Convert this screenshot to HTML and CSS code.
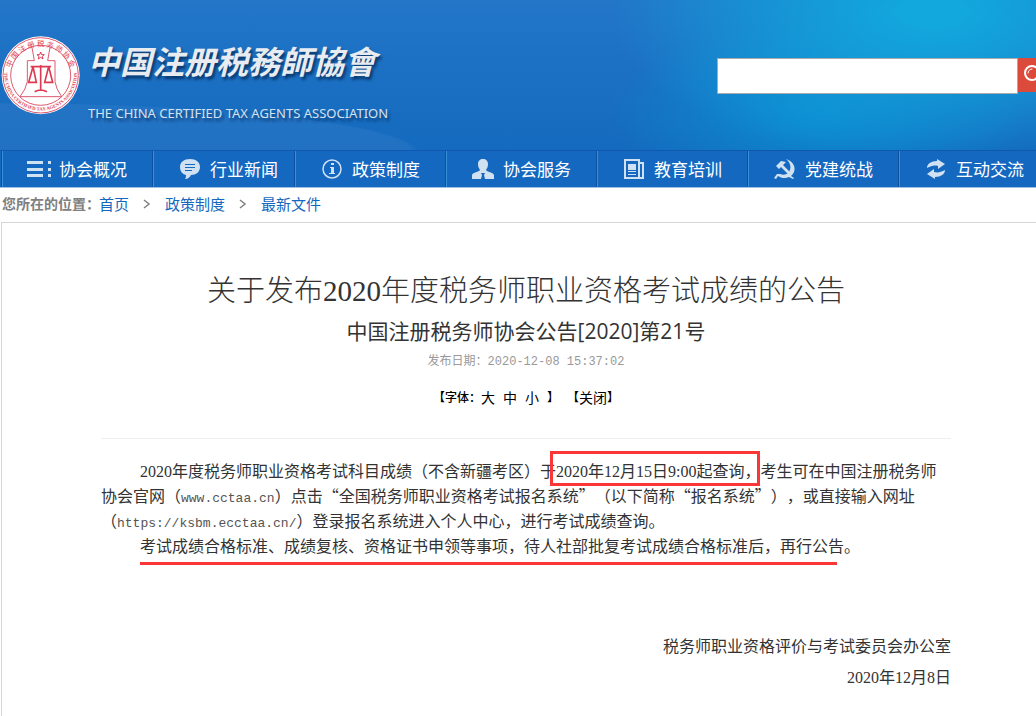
FILE: index.html
```html
<!DOCTYPE html>
<html lang="zh-CN">
<head>
    <meta charset="UTF-8">
    <meta name="viewport" content="width=device-width, initial-scale=1.0">
    <title>关于发布2020年度税务师职业资格考试成绩的公告</title>
    <link rel="stylesheet" href="styles.css">
</head>
<body>
    <header class="header">
        <a class="logo" href="#">
            <svg class="seal" viewBox="0 0 240 240" aria-hidden="true">
                <defs>
                    <path id="ringTop" d="M30 147 A94 94 0 1 1 214 147"/>
                    <path id="ringBottom" d="M17 88 A109 109 0 1 0 227 88"/>
                </defs>
                <circle cx="122" cy="121" r="117" fill="#fff"/>
                <circle cx="122" cy="121" r="113" fill="none" stroke="#dd5a70" stroke-width="3"/>
                <circle cx="122" cy="121" r="90" fill="none" stroke="#dd5a70" stroke-width="3"/>
                <path d="M96 37 L103 77 H82 V140 Q78 162 60 185 H185 Q168 162 165 140 V77 H143 L150 37" fill="none" stroke="#dd5a70" stroke-width="3"/>
                <path d="M122 51 l3 8 h8 l-6 5 2 8 -7 -5 -7 5 2 -8 -6 -5 h8z" fill="none" stroke="#dd3a50" stroke-width="3"/>
                <path d="M92 95 H153 M122 90 V168 M99 95 L86 142 H109 Z M146 95 L134 142 H158 Z M104 170 Q122 160 141 170" fill="none" stroke="#dd3a50" stroke-width="5"/>
                <text class="seal-cn"><textPath href="#ringTop" startOffset="50%">中 国 注 册 税 务 师 协 会</textPath></text>
                <text class="seal-en"><textPath href="#ringBottom" startOffset="50%">THE CHINA CERTIFIED TAX AGENTS ASSOCIATION</textPath></text>
            </svg>
            <span class="logo-text">
                <span class="logo-cn">中国注册税務師協會</span>
                <span class="logo-en">THE CHINA CERTIFIED TAX AGENTS ASSOCIATION</span>
            </span>
        </a>
        <form class="search">
            <input type="text" name="keyword" aria-label="搜索">
            <button type="submit" aria-label="搜索">
                <svg viewBox="0 0 24 24" width="24" height="24" fill="none" stroke="#fff" stroke-linecap="round">
                    <circle cx="9" cy="11" r="7" stroke-width="2"/>
                    <path d="M5 11 a4 4 0 0 1 4 -4" stroke-width="1"/>
                    <path d="M14 16 L20 22" stroke-width="3"/>
                </svg>
            </button>
        </form>
    </header>

    <nav class="nav">
        <a href="#">
            <svg viewBox="0 0 24 20"><path d="M0 2h16v3H0zM0 9h16v3H0zM0 15h16v3H0zM21 2h3v3h-3zM21 9h3v3h-3zM21 15h3v3h-3z"/></svg>
            协会概况
        </a>
        <a class="narrow" href="#">
            <svg viewBox="0 0 24 20"><path fill-rule="evenodd" d="M12 0c6 0 10 3 10 8s-4 8-9 8c-1 2-3 4-6 4 1-1 1-3 1-4-4-1-6-4-6-8 0-5 4-8 10-8zM7 5v1h10V5zM7 8v1h10V8zM7 11v1h7v-1z"/></svg>
            行业新闻
        </a>
        <a href="#">
            <svg viewBox="0 0 24 20"><circle cx="12" cy="10" r="9" fill="none" stroke="#d0e1f2" stroke-width="1.5"/><path d="M11 4h3v2h-3zM10 8h4v6h1v1h-6v-1h2V9h-1z"/></svg>
            政策制度
        </a>
        <a href="#">
            <svg viewBox="0 0 24 20"><path d="M12 0c3 0 5 2 5 5s-1 4-2 6c1 2 7 2 8 5v4H14l-1-4 1-2h-4l1 2-1 4H1v-4c1-3 7-3 8-5-1-2-2-3-2-6s2-5 5-5z"/></svg>
            协会服务
        </a>
        <a href="#">
            <svg viewBox="0 0 24 20"><path fill-rule="evenodd" d="M2 0h16v3h4v17H2zM4 2v16h12V2zM18 5v13h2V5zM6 5h8v6H6zM6 12h8v1H6zM6 15h8v1H6z"/></svg>
            教育培训
        </a>
        <a href="#">
            <svg viewBox="0 0 24 20"><path d="M3 7l5-5 5 1-3 3 9 9-2 2-9-9-2 2z"/><path d="M13 0c7 2 10 8 8 13-1 2-2 3-3 4l3 2-1 1-4-2c-4 2-8 1-11-1l-2 3-2-1 3-4 3 0c3 1 6 1 8-1 4-4 3-10-2-14z"/></svg>
            党建统战
        </a>
        <a href="#">
            <svg viewBox="0 0 24 20"><path d="M3 9c0-4 4-7 10-7V0l8 5-7 5V7c-4-1-7 0-11 2zM21 11c0 4-4 7-10 7v2l-8-5 7-5v3c4 1 7 0 11-2z"/></svg>
            互动交流
        </a>
    </nav>

    <div class="crumbs">
        <strong>您所在的位置：</strong>
        <a href="#">首页</a>
        <svg class="sep" viewBox="0 0 8 10"><path d="M1 1l5 4-5 4"/></svg>
        <a href="#">政策制度</a>
        <svg class="sep" viewBox="0 0 8 10"><path d="M1 1l5 4-5 4"/></svg>
        <a href="#">最新文件</a>
    </div>

    <main class="article">
        <h1>关于发布2020年度税务师职业资格考试成绩的公告</h1>
        <h2>中国注册税务师协会公告[2020]第21号</h2>
        <p class="date">发布日期：2020-12-08 15:37:02</p>
        <div class="tools">
            <span class="label">【字体：</span>
            <button type="button">大</button>
            <button type="button">中</button>
            <button type="button">小</button>
            <span class="label">】</span>
            <span class="label close">【</span><button type="button">关闭</button><span class="label">】</span>
        </div>
        <div class="content">
            <p>2020年度税务师职业资格考试科目成绩（不含新疆考区）于<span class="red-box">2020年12月15日9:00起查询，</span>考生可在中国注册税务师协会官网（<span class="url">www.cctaa.cn</span>）点击<span class="quote">“全国税务师职业资格考试报名系统”</span>（以下简称<span class="quote">“报名系统”</span>），或直接输入网址（<span class="url">https://ksbm.ecctaa.cn/</span>）登录报名系统进入个人中心，进行考试成绩查询。</p>
            <p><span class="red-line">考试成绩合格标准、成绩复核、资格证书申领等事项，待人社部批复考试成绩合格标准后，再行公告。</span></p>
        </div>
        <div class="sign">
            <p>税务师职业资格评价与考试委员会办公室</p>
            <p>2020年12月8日</p>
        </div>
    </main>
</body>
</html>
```
FILE: styles.css
```css
* {
    box-sizing: border-box;
}

body {
    margin: 0;
    background: #fff;
    color: #333;
    font-family: "Noto Sans CJK SC", sans-serif;
    overflow-x: hidden;
}

a {
    text-decoration: none;
}

p, h1, h2 {
    margin: 0;
}

/* header */
.header {
    display: flex;
    justify-content: space-between;
    align-items: flex-start;
    height: 150px;
    overflow: hidden;
    background:
        radial-gradient(ellipse 420px 50px at 0% 102%, rgba(60, 130, 205, 0.3) 98%, transparent 100%),
        radial-gradient(ellipse 320px 150px at 90% 8%, #12a7dd 10%, rgba(18, 160, 218, 0.7) 50%, transparent 100%),
        radial-gradient(ellipse 210px 90px at 79% 75%, rgba(8, 150, 215, 0.8), transparent 100%),
        linear-gradient(#2376c8, #146abe);
}

.logo {
    display: flex;
    padding-top: 35px;
}

.seal {
    width: 80px;
    height: 80px;
}

.seal text {
    fill: #dd3a50;
    text-anchor: middle;
}

.seal-cn {
    font-size: 22px;
}

.seal-en {
    font-family: "Liberation Serif", serif;
    font-size: 14px;
    font-weight: bold;
}

.logo-text {
    display: flex;
    flex-direction: column;
    margin-left: 8px;
    color: #e8ecf0;
    text-shadow: 2px 3px 3px rgba(0, 30, 70, 0.7);
    white-space: nowrap;
}

.logo-cn {
    height: 68px;
    font-size: 32px;
    font-style: italic;
    font-weight: 700;
    line-height: 50px;
}

.logo-en {
    color: #d3e2f1;
    font-family: "Noto Sans", sans-serif;
    font-size: 13px;
    line-height: 20px;
}

.search {
    display: flex;
    align-items: flex-start;
    margin: 58px -31px 0 0;
}

.search input {
    width: 301px;
    height: 36px;
    padding: 0 8px;
    border: 1px solid #aaa;
    background: #fff;
    font-size: 14px;
}

.search button {
    width: 49px;
    height: 34px;
    padding: 4px 5px;
    border: none;
    background: #dc4a3c;
    text-align: left;
    cursor: pointer;
}

/* nav */
.nav {
    display: flex;
    height: 38px;
    padding-left: 2px;
    overflow: hidden;
    background: #1468c0;
    border-top: 1px solid #0f58ae;
    border-bottom: 1px solid #9bc0e4;
}

.nav a {
    display: flex;
    flex: none;
    gap: 8px;
    width: 151px;
    padding-left: 24px;
    border-left: 1px solid #3a8fd8;
    box-shadow: -1px 0 #10509c;
    color: #fff;
    font-size: 17px;
    line-height: 36px;
    white-space: nowrap;
}

.nav a.narrow {
    width: 142px;
}

.nav svg {
    width: 24px;
    height: 20px;
    margin-top: 8px;
    fill: #d0e1f2;
}

/* breadcrumb */
.crumbs {
    display: flex;
    align-items: center;
    height: 34px;
    padding: 0 0 4px 2px;
    font-size: 15px;
    white-space: nowrap;
}

.crumbs strong {
    width: 97px;
    color: #808080;
    font-size: 14px;
}

.crumbs a {
    color: #1468c0;
}

.sep {
    width: 8px;
    height: 10px;
    margin: 2px 14px 0;
    fill: none;
    stroke: #808080;
    stroke-width: 1.5;
}

/* article */
.article {
    min-height: 494px;
    margin-left: 1px;
    padding: 48px 85px 0 99px;
    border-top: 1px solid #d6d6d6;
    border-left: 1px solid #d6d6d6;
    text-align: center;
}

.article h1 {
    font-family: "Liberation Serif", "Noto Sans CJK SC", serif;
    font-size: 29px;
    font-weight: 300;
    line-height: 40px;
}

.article h2 {
    font-family: "Open Sans", "Noto Sans CJK SC", sans-serif;
    font-size: 21px;
    font-weight: normal;
    line-height: 40px;
}

.date {
    padding-top: 1px;
    color: #999;
    font-family: "Liberation Mono", "Noto Sans CJK SC", monospace;
    font-size: 12px;
    line-height: 20px;
}

.tools {
    display: flex;
    justify-content: center;
    gap: 8px;
    padding: 15px 0 31px;
    border-bottom: 1px solid #eee;
    color: #000;
    line-height: 20px;
}

.tools button {
    padding: 0;
    border: none;
    background: none;
    color: #000;
    font-family: inherit;
    font-size: 14px;
    line-height: 20px;
    cursor: pointer;
}

.label {
    font-size: 12px;
    font-weight: 500;
    text-spacing-trim: space-all;
}

.tools .label:first-child,
.tools .close,
.tools .close + button {
    margin-right: -8px;
}

.content {
    padding-top: 20px;
    font-family: "Liberation Serif", "Noto Sans CJK SC", serif;
    font-size: 16px;
    line-height: 25px;
    text-align: left;
    text-indent: 39px;
    text-spacing-trim: space-all;
}

.url {
    color: #555;
    font-family: "Liberation Mono", monospace;
    font-size: 13px;
    line-height: 1;
}

.quote {
    font-family: "Noto Sans CJK SC", sans-serif;
    line-height: 1;
}

.red-box,
.red-line {
    position: relative;
    text-indent: 0;
}

.red-box::after {
    content: "";
    position: absolute;
    inset: -12px 0 -6px -6px;
    border: 3px solid #fa3636;
}

.red-line::after {
    content: "";
    position: absolute;
    right: 23px;
    bottom: -10px;
    left: 0;
    height: 3px;
    background: #fa3636;
}

.sign {
    padding-top: 72px;
    font-family: "Liberation Serif", "Noto Sans CJK SC", serif;
    font-size: 16px;
    line-height: 31px;
    text-align: right;
}
```
